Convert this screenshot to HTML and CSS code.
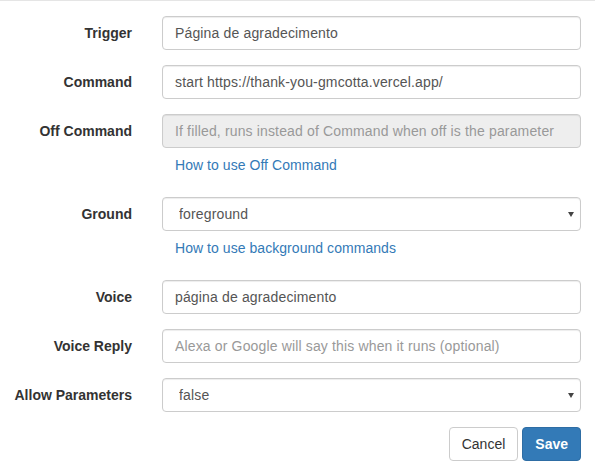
FILE: index.html
```html
<!DOCTYPE html>
<html lang="en">
<head>
<meta charset="utf-8">
<title>Edit command</title>
<link rel="stylesheet" href="styles.css">
</head>
<body>
<form class="form">
  <div class="group">
    <label class="label">Trigger</label>
    <div class="field"><input class="control" type="text" value="Página de agradecimento"></div>
  </div>
  <div class="group">
    <label class="label">Command</label>
    <div class="field"><input class="control" type="text" value="start https://thank-you-gmcotta.vercel.app/"></div>
  </div>
  <div class="group">
    <label class="label">Off Command</label>
    <div class="field">
      <input class="control" type="text" disabled placeholder="If filled, runs instead of Command when off is the parameter">
      <p class="help"><a href="#">How to use Off Command</a></p>
    </div>
  </div>
  <div class="group">
    <label class="label">Ground</label>
    <div class="field">
      <div class="select-wrap">
        <select class="control select"><option>foreground</option><option>background</option></select>
        <span class="arrow"></span>
      </div>
      <p class="help"><a href="#">How to use background commands</a></p>
    </div>
  </div>
  <div class="group">
    <label class="label">Voice</label>
    <div class="field"><input class="control" type="text" value="página de agradecimento"></div>
  </div>
  <div class="group">
    <label class="label">Voice Reply</label>
    <div class="field"><input class="control" type="text" placeholder="Alexa or Google will say this when it runs (optional)"></div>
  </div>
  <div class="group">
    <label class="label">Allow Parameters</label>
    <div class="field">
      <div class="select-wrap">
        <select class="control select"><option>false</option><option>true</option></select>
        <span class="arrow"></span>
      </div>
    </div>
  </div>
  <div class="actions">
    <button type="button" class="btn btn-default">Cancel</button>
    <button type="button" class="btn btn-primary">Save</button>
  </div>
</form>
</body>
</html>
```
FILE: styles.css
```css
* { box-sizing: border-box; }
html, body { margin: 0; padding: 0; background: #fff; }
body {
  font-family: "Liberation Sans", Arial, sans-serif;
  font-size: 14px;
  line-height: 20px;
  color: #333;
  border-top: 1px solid #e5e5e5;
}
.form {
  padding: 15px 14px 0 0;
}
.group {
  display: grid;
  grid-template-columns: 132px 1fr;
  column-gap: 30px;
  margin-bottom: 15px;
}
.label {
  text-align: right;
  font-weight: bold;
  padding-top: 7px;
  color: #333;
}
.field { min-width: 0; }
.control {
  display: block;
  width: 100%;
  height: 34px;
  padding: 6px 12px;
  font-family: inherit;
  font-size: 14px;
  line-height: 20px;
  letter-spacing: 0.15px;
  color: #555;
  background: #fff;
  border: 1px solid #ccc;
  border-radius: 4px;
  box-shadow: inset 0 1px 1px rgba(0,0,0,.075);
  margin: 0;
  outline: none;
}
.control::placeholder { color: #999; opacity: 1; }
.control:disabled { background: #eee; }
.select-wrap { position: relative; }
.select {
  -webkit-appearance: none;
  appearance: none;
  padding-left: 16px;
}
.arrow {
  position: absolute;
  right: 7px;
  top: 15px;
  width: 0;
  height: 0;
  border-left: 3.5px solid transparent;
  border-right: 3.5px solid transparent;
  border-top: 5px solid #444;
  pointer-events: none;
}
.help {
  margin: 7px 0 7px;
  padding-left: 13px;
  line-height: 20px;
  letter-spacing: 0.05px;
}
.help a { color: #337ab7; text-decoration: none; }
.actions {
  display: flex;
  justify-content: flex-end;
  gap: 4px;
}
.btn {
  height: 34px;
  padding: 6px 12px;
  font-family: inherit;
  font-size: 14px;
  line-height: 20px;
  border: 1px solid;
  border-radius: 4px;
  cursor: pointer;
}
.btn-default { background: #fff; color: #333; border-color: #ccc; }
.btn-primary { background: #337ab7; color: #fff; border-color: #2e6da4; font-weight: bold; }
```
